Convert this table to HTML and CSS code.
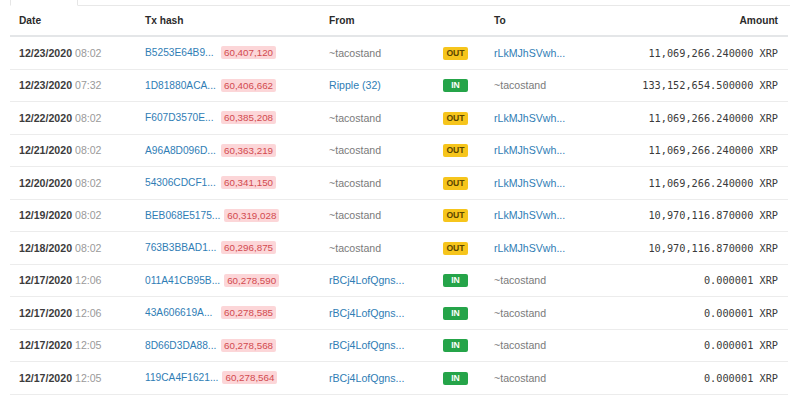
FILE: index.html
```html
<!DOCTYPE html>
<html lang="en">
<head>
<meta charset="utf-8">
<title>Transactions</title>
<link rel="stylesheet" href="styles.css">
</head>
<body>
<div class="tabs">
  <div class="tab active"><span>Transactions</span></div>
  <div class="tab"><span>Payments</span></div>
  <div class="tab"><span>Trades</span></div>
  <div class="tab"><span>Offers</span></div>
  <div class="tab"><span>Escrows</span></div>
  <div class="tab"><span>Checks</span></div>
  <div class="tab"><span>Channels</span></div>
  <div class="tab"><span>Tickets</span></div>
  <div class="tab"><span>Signers</span></div>
  <div class="tab fill"></div>
</div>
<div class="table">
  <div class="row head">
    <div class="c date">Date</div>
    <div class="c tx">Tx hash</div>
    <div class="c from">From</div>
    <div class="c dir"></div>
    <div class="c to">To</div>
    <div class="c amt">Amount</div>
  </div>

  <div class="row">
    <div class="c date"><b>12/23/2020</b> <span class="time">08:02</span></div>
    <div class="c tx"><a class="link hash">B5253E64B9...</a><span class="ledger">60,407,120</span></div>
    <div class="c from muted">~tacostand</div>
    <div class="c dir"><span class="badge out">OUT</span></div>
    <div class="c to"><a class="link">rLkMJhSVwh...</a></div>
    <div class="c amt">11,069,266.240000 XRP</div>
  </div>
  <div class="row">
    <div class="c date"><b>12/23/2020</b> <span class="time">07:32</span></div>
    <div class="c tx"><a class="link hash">1D81880ACA...</a><span class="ledger">60,406,662</span></div>
    <div class="c from"><a class="link">Ripple (32)</a></div>
    <div class="c dir"><span class="badge in">IN</span></div>
    <div class="c to muted">~tacostand</div>
    <div class="c amt">133,152,654.500000 XRP</div>
  </div>
  <div class="row">
    <div class="c date"><b>12/22/2020</b> <span class="time">08:02</span></div>
    <div class="c tx"><a class="link hash">F607D3570E...</a><span class="ledger">60,385,208</span></div>
    <div class="c from muted">~tacostand</div>
    <div class="c dir"><span class="badge out">OUT</span></div>
    <div class="c to"><a class="link">rLkMJhSVwh...</a></div>
    <div class="c amt">11,069,266.240000 XRP</div>
  </div>
  <div class="row">
    <div class="c date"><b>12/21/2020</b> <span class="time">08:02</span></div>
    <div class="c tx"><a class="link hash">A96A8D096D...</a><span class="ledger">60,363,219</span></div>
    <div class="c from muted">~tacostand</div>
    <div class="c dir"><span class="badge out">OUT</span></div>
    <div class="c to"><a class="link">rLkMJhSVwh...</a></div>
    <div class="c amt">11,069,266.240000 XRP</div>
  </div>
  <div class="row">
    <div class="c date"><b>12/20/2020</b> <span class="time">08:02</span></div>
    <div class="c tx"><a class="link hash">54306CDCF1...</a><span class="ledger">60,341,150</span></div>
    <div class="c from muted">~tacostand</div>
    <div class="c dir"><span class="badge out">OUT</span></div>
    <div class="c to"><a class="link">rLkMJhSVwh...</a></div>
    <div class="c amt">11,069,266.240000 XRP</div>
  </div>
  <div class="row">
    <div class="c date"><b>12/19/2020</b> <span class="time">08:02</span></div>
    <div class="c tx"><a class="link hash">BEB068E5175...</a><span class="ledger">60,319,028</span></div>
    <div class="c from muted">~tacostand</div>
    <div class="c dir"><span class="badge out">OUT</span></div>
    <div class="c to"><a class="link">rLkMJhSVwh...</a></div>
    <div class="c amt">10,970,116.870000 XRP</div>
  </div>
  <div class="row">
    <div class="c date"><b>12/18/2020</b> <span class="time">08:02</span></div>
    <div class="c tx"><a class="link hash">763B3BBAD1...</a><span class="ledger">60,296,875</span></div>
    <div class="c from muted">~tacostand</div>
    <div class="c dir"><span class="badge out">OUT</span></div>
    <div class="c to"><a class="link">rLkMJhSVwh...</a></div>
    <div class="c amt">10,970,116.870000 XRP</div>
  </div>
  <div class="row">
    <div class="c date"><b>12/17/2020</b> <span class="time">12:06</span></div>
    <div class="c tx"><a class="link hash">011A41CB95B...</a><span class="ledger">60,278,590</span></div>
    <div class="c from"><a class="link">rBCj4LofQgns...</a></div>
    <div class="c dir"><span class="badge in">IN</span></div>
    <div class="c to muted">~tacostand</div>
    <div class="c amt">0.000001 XRP</div>
  </div>
  <div class="row">
    <div class="c date"><b>12/17/2020</b> <span class="time">12:06</span></div>
    <div class="c tx"><a class="link hash">43A606619A...</a><span class="ledger">60,278,585</span></div>
    <div class="c from"><a class="link">rBCj4LofQgns...</a></div>
    <div class="c dir"><span class="badge in">IN</span></div>
    <div class="c to muted">~tacostand</div>
    <div class="c amt">0.000001 XRP</div>
  </div>
  <div class="row">
    <div class="c date"><b>12/17/2020</b> <span class="time">12:05</span></div>
    <div class="c tx"><a class="link hash">8D66D3DA88...</a><span class="ledger">60,278,568</span></div>
    <div class="c from"><a class="link">rBCj4LofQgns...</a></div>
    <div class="c dir"><span class="badge in">IN</span></div>
    <div class="c to muted">~tacostand</div>
    <div class="c amt">0.000001 XRP</div>
  </div>
  <div class="row">
    <div class="c date"><b>12/17/2020</b> <span class="time">12:05</span></div>
    <div class="c tx"><a class="link hash">119CA4F1621...</a><span class="ledger">60,278,564</span></div>
    <div class="c from"><a class="link">rBCj4LofQgns...</a></div>
    <div class="c dir"><span class="badge in">IN</span></div>
    <div class="c to muted">~tacostand</div>
    <div class="c amt">0.000001 XRP</div>
  </div>
</div>
</body>
</html>
```

FILE: styles.css
```css
html, body {
  margin: 0;
  padding: 0;
  background: #ffffff;
}
body {
  font-family: "Liberation Sans", Arial, sans-serif;
  font-size: 10.6px;
  color: #333333;
  overflow: hidden;
}

/* tab strip, mostly scrolled out of view */
.tabs {
  display: flex;
  height: 6px;
  overflow: hidden;
  padding-left: 10px;
  padding-right: 10px;
  align-items: flex-end;
}
.tab {
  height: 20px;
  border-bottom: 1px solid #e8e8e8;
  padding: 0 12px;
  display: flex;
  align-items: flex-start;
  box-sizing: border-box;
  color: #d6d6d6;
  font-size: 11px;
  line-height: 16px;
}
.tab.active {
  border: 1px solid #e6e6e6;
  border-bottom-color: transparent;
  width: 68px;
  color: #cfcfcf;
}
.tab.fill {
  flex: 1;
  padding: 0;
}

/* table */
.table {
  margin: 0 12px 0 10px;
}
.row {
  display: grid;
  grid-template-columns: 126px 184px 114px 51px 112px 1fr;
  align-items: center;
  height: 31.5px;
  border-bottom: 1px solid #ececec;
}
.row.head {
  height: 29px;
  border-bottom: 2px solid #e4e6e8;
  font-weight: bold;
  font-size: 10.2px;
  color: #2b2b2b;
}
.c {
  padding-left: 9px;
  white-space: nowrap;
}
.c.amt {
  text-align: right;
  padding-right: 10px;
  padding-left: 0;
}
.row:not(.head) .c.amt {
  font-family: "DejaVu Sans Mono", "Liberation Mono", monospace;
  font-size: 10.25px;
  color: #3a3a3a;
}

.date b {
  font-weight: bold;
  color: #3c3c3c;
}
.time {
  color: #9a9a9a;
}
.link {
  color: #2f7db5;
  text-decoration: none;
}
.muted {
  color: #7a7a7a;
}
.tx {
  display: flex;
  align-items: center;
}
.hash {
  display: inline-block;
  min-width: 72px;
  font-size: 10.2px;
  white-space: nowrap;
}
.ledger {
  display: inline-block;
  margin-left: 4px;
  background: #fcd6d8;
  color: #d24a4f;
  font-size: 9.8px;
  line-height: 13px;
  padding: 0 3px;
  border-radius: 2px;
}
.badge {
  display: inline-block;
  width: 25px;
  height: 13px;
  line-height: 13px;
  border-radius: 2px;
  text-align: center;
  font-size: 8.6px;
  font-weight: bold;
  vertical-align: middle;
}
.badge.out {
  background: #f6c51c;
  color: #5b4600;
}
.badge.in {
  background: #25a449;
  color: #ffffff;
}
```
